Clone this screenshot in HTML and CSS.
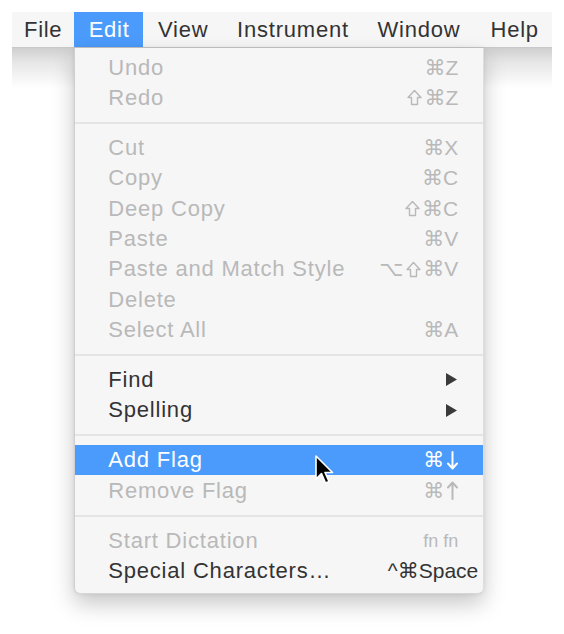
FILE: index.html
```html
<!DOCTYPE html>
<html>
<head>
<meta charset="utf-8">
<link rel="stylesheet" href="styles.css">
</head>
<body>
<div class="screen">
  <div class="menubar">
    <div class="mb-item first">File</div>
    <div class="mb-item active">Edit
      <div class="menu">
        <div class="row dis"><span class="label">Undo</span><span class="key">⌘Z</span></div>
        <div class="row dis"><span class="label">Redo</span><span class="key"><svg class="shift" width="15" height="17" viewBox="0 0 15 17"><path d="M7.5 1.5 L14 8.5 L10.5 8.5 L10.5 15.5 L4.5 15.5 L4.5 8.5 L1 8.5 Z" fill="none" stroke="currentColor" stroke-width="1.4" stroke-linejoin="round"/></svg>⌘Z</span></div>
        <div class="sep"></div>
        <div class="row dis"><span class="label">Cut</span><span class="key">⌘X</span></div>
        <div class="row dis"><span class="label">Copy</span><span class="key">⌘C</span></div>
        <div class="row dis"><span class="label">Deep Copy</span><span class="key"><svg class="shift" width="15" height="17" viewBox="0 0 15 17"><path d="M7.5 1.5 L14 8.5 L10.5 8.5 L10.5 15.5 L4.5 15.5 L4.5 8.5 L1 8.5 Z" fill="none" stroke="currentColor" stroke-width="1.4" stroke-linejoin="round"/></svg>⌘C</span></div>
        <div class="row dis"><span class="label">Paste</span><span class="key">⌘V</span></div>
        <div class="row dis"><span class="label">Paste and Match Style</span><span class="key">⌥<svg class="shift" width="15" height="17" viewBox="0 0 15 17"><path d="M7.5 1.5 L14 8.5 L10.5 8.5 L10.5 15.5 L4.5 15.5 L4.5 8.5 L1 8.5 Z" fill="none" stroke="currentColor" stroke-width="1.4" stroke-linejoin="round"/></svg>⌘V</span></div>
        <div class="row dis"><span class="label">Delete</span><span class="key"></span></div>
        <div class="row dis"><span class="label">Select All</span><span class="key">⌘A</span></div>
        <div class="sep"></div>
        <div class="row"><span class="label">Find</span><span class="key"><svg class="tri" width="13" height="15" viewBox="0 0 13 15"><path d="M1 1 L12 7.5 L1 14 Z" fill="#3a3a3a"/></svg></span></div>
        <div class="row"><span class="label">Spelling</span><span class="key"><svg class="tri" width="13" height="15" viewBox="0 0 13 15"><path d="M1 1 L12 7.5 L1 14 Z" fill="#3a3a3a"/></svg></span></div>
        <div class="sep"></div>
        <div class="row hl"><span class="label">Add Flag</span><span class="key">⌘<svg class="arrow" width="11" height="19" viewBox="0 0 11 19"><path d="M5.5 1 L5.5 17 M1 12.5 L5.5 17.5 L10 12.5" fill="none" stroke="currentColor" stroke-width="2" stroke-linecap="round" stroke-linejoin="round"/></svg></span>
          <svg class="cursor" width="22" height="32" viewBox="0 0 22 32"><path d="M2 1 L2 24 L7.5 18.5 L11.5 28 L15 26.5 L11 17.5 L18.5 17.5 Z" fill="#000" stroke="#fff" stroke-width="1.6" stroke-linejoin="round"/></svg>
        </div>
        <div class="row dis"><span class="label">Remove Flag</span><span class="key">⌘<svg class="arrow" width="11" height="19" viewBox="0 0 11 19"><path d="M5.5 18 L5.5 2 M1 6.5 L5.5 1.5 L10 6.5" fill="none" stroke="currentColor" stroke-width="2" stroke-linecap="round" stroke-linejoin="round"/></svg></span></div>
        <div class="sep"></div>
        <div class="row dis"><span class="label">Start Dictation</span><span class="key small">fn fn</span></div>
        <div class="row"><span class="label">Special Characters…</span><span class="key wide">^⌘Space</span></div>
      </div>
    </div>
    <div class="mb-item">View</div>
    <div class="mb-item">Instrument</div>
    <div class="mb-item">Window</div>
    <div class="mb-item">Help</div>
  </div>
  <div class="shade"></div>
</div>
</body>
</html>
```

FILE: styles.css
```css
html, body {
  margin: 0;
  padding: 0;
  background: #ffffff;
}
body {
  font-family: "Liberation Sans", Arial, "DejaVu Sans", sans-serif;
  color: #333;
}
.screen {
  box-sizing: border-box;
  min-height: 634px;
  padding: 12px 12px 0 12px;
}
.menubar {
  display: flex;
  height: 35px;
  background: #f6f6f6;
  border-bottom: 1px solid #c9c9c9;
  position: relative;
  z-index: 2;
}
.mb-item {
  position: relative;
  padding: 0 14px 0 14.5px;
  font-size: 22px;
  letter-spacing: 0.8px;
  line-height: 35px;
  color: #333;
}
.mb-item.first { padding-left: 12px; padding-right: 12px; letter-spacing: 0.7px; }
.mb-item:last-child { padding-left: 16px; }
.mb-item.active {
  background: #4b9bfc;
  color: #fff;
  letter-spacing: 0.7px;
}
.shade {
  height: 40px;
  background: linear-gradient(to bottom, #cfcfcf 0%, #e6e6e6 35%, #ffffff 100%);
}
.menu {
  position: absolute;
  left: 0;
  top: 36px;
  width: 410px;
  box-sizing: border-box;
  padding: 4.5px 0 7px 0;
  background: #f6f6f6;
  border-left: 1px solid #cfcfcf;
  border-right: 1px solid #dedede;
  border-bottom: 1px solid #d6d6d6;
  border-radius: 0 0 6px 6px;
  box-shadow: 0 10px 22px rgba(0, 0, 0, 0.22), 0 0 4px rgba(0, 0, 0, 0.08);
  color: #333;
  font-size: 22px;
  letter-spacing: 0.8px;
}
.row {
  position: relative;
  display: flex;
  justify-content: space-between;
  align-items: center;
  height: 30.3px;
  padding: 0 25px 0 33px;
  line-height: 30px;
  white-space: nowrap;
}
.row.dis { color: #b9b9b9; }
.row.hl {
  background: #4b9bfc;
  color: #fff;
}
.key {
  font-family: "Liberation Sans", "DejaVu Sans", sans-serif;
  display: flex;
  align-items: center;
  font-size: 21px;
  letter-spacing: 0;
}
.key.small { font-size: 18px; }
.key.wide { margin-right: -20px; }
.shift { display: block; margin: 0 2px 0 3px; }
.arrow { display: block; margin-left: 3px; }
.tri { display: block; }
.sep {
  height: 2px;
  margin: 8.9px 0;
  background: #e4e4e4;
}
.cursor {
  position: absolute;
  left: 239px;
  top: 10px;
}
```
